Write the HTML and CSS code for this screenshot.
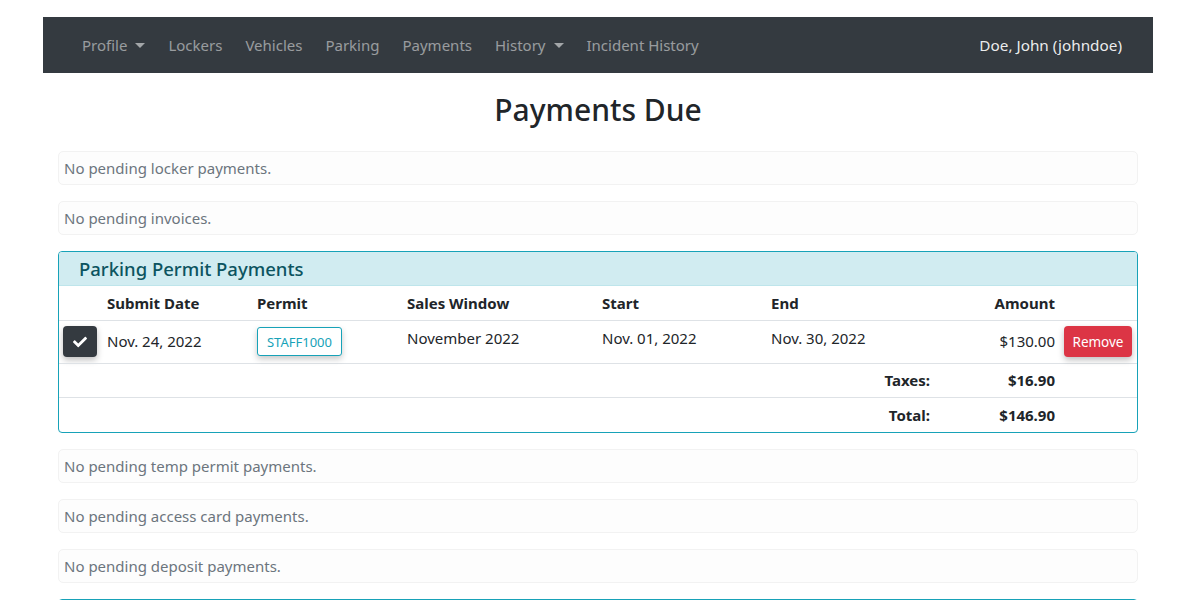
FILE: index.html
```html
<!DOCTYPE html>
<html lang="en">
<head>
<meta charset="utf-8">
<title>Payments Due</title>
<link rel="stylesheet" href="styles.css">
</head>
<body>
<div class="page">
  <nav class="navbar">
    <ul class="nav-left">
      <li class="nav-link dropdown">Profile <span class="caret"></span></li>
      <li class="nav-link">Lockers</li>
      <li class="nav-link">Vehicles</li>
      <li class="nav-link">Parking</li>
      <li class="nav-link">Payments</li>
      <li class="nav-link dropdown">History <span class="caret"></span></li>
      <li class="nav-link">Incident History</li>
    </ul>
    <div class="nav-user">Doe, John (johndoe)</div>
  </nav>

  <main class="content">
    <h2 class="title">Payments Due</h2>

    <div class="empty-box">No pending locker payments.</div>
    <div class="empty-box">No pending invoices.</div>

    <section class="card">
      <h5 class="card-header">Parking Permit Payments</h5>
      <table class="pay-table">
        <colgroup>
          <col class="c-check"><col class="c-date"><col class="c-permit"><col class="c-window"><col class="c-start"><col class="c-end"><col class="c-amount"><col class="c-action">
        </colgroup>
        <thead>
          <tr>
            <th></th>
            <th>Submit Date</th>
            <th>Permit</th>
            <th>Sales Window</th>
            <th>Start</th>
            <th>End</th>
            <th class="right">Amount</th>
            <th></th>
          </tr>
        </thead>
        <tbody>
          <tr class="item-row">
            <td class="mid"><button class="btn-check" aria-label="Selected"><svg viewBox="0 0 512 512" width="14" height="14"><path fill="#fff" d="M173.898 439.404l-166.4-166.4c-9.997-9.997-9.997-26.206 0-36.204l36.203-36.204c9.997-9.998 26.207-9.998 36.204 0L192 312.69 432.095 72.596c9.997-9.997 26.207-9.997 36.204 0l36.203 36.204c9.997 9.997 9.997 26.206 0 36.204l-294.4 294.401c-9.998 9.997-26.207 9.997-36.204-.001z"/></svg></button></td>
            <td class="mid">Nov. 24, 2022</td>
            <td class="mid"><button class="btn-permit">STAFF1000</button></td>
            <td class="top">November 2022</td>
            <td class="top">Nov. 01, 2022</td>
            <td class="top">Nov. 30, 2022</td>
            <td class="mid right">$130.00</td>
            <td class="mid action"><button class="btn-remove">Remove</button></td>
          </tr>
          <tr class="sum-row">
            <td colspan="6" class="right bold">Taxes:</td>
            <td class="right bold">$16.90</td>
            <td></td>
          </tr>
          <tr class="sum-row last">
            <td colspan="6" class="right bold">Total:</td>
            <td class="right bold">$146.90</td>
            <td></td>
          </tr>
        </tbody>
      </table>
    </section>

    <div class="empty-box">No pending temp permit payments.</div>
    <div class="empty-box">No pending access card payments.</div>
    <div class="empty-box">No pending deposit payments.</div>

    <section class="card next-card"></section>
  </main>
</div>
</body>
</html>
```

FILE: styles.css
```css
* { box-sizing: border-box; }

html, body {
  margin: 0;
  padding: 0;
  background: #fff;
  overflow: hidden;
}

body {
  font-family: "Noto Sans", "Open Sans", sans-serif;
  font-size: 15px;
  line-height: 1.5;
  color: #212529;
}

.page {
  width: 1110px;
  margin-left: 43px;
  padding-top: 17px;
}

.navbar {
  height: 56px;
  background: #343a40;
  display: flex;
  align-items: center;
  justify-content: space-between;
  padding: 0 31px 0 27.5px;
}

.nav-left {
  list-style: none;
  margin: 0;
  padding: 0;
  display: flex;
}

.nav-link {
  padding: 0 11.5px;
  color: rgba(255, 255, 255, 0.5);
  display: flex;
  align-items: center;
  gap: 4px;
}

.caret {
  display: inline-block;
  width: 0;
  height: 0;
  margin-left: 4px;
  border-top: 5px solid rgba(255, 255, 255, 0.55);
  border-left: 5px solid transparent;
  border-right: 5px solid transparent;
}

.nav-user {
  color: rgba(255, 255, 255, 0.92);
  font-size: 15.3px;
}

.content {
  padding: 0 15px;
}

.title {
  margin: 19px 0 23px;
  text-align: center;
  font-size: 30px;
  font-weight: 500;
  line-height: 1.2;
}

.empty-box {
  height: 34px;
  margin-bottom: 16px;
  padding: 0 5px;
  display: flex;
  align-items: center;
  color: #6c757d;
  background: #fdfdfd;
  border: 1px solid #f2f2f2;
  border-radius: 5px;
}

.card {
  border: 1px solid #17a2b8;
  border-radius: 4px;
  margin-bottom: 16px;
  overflow: hidden;
}

.card-header {
  margin: 0;
  height: 34px;
  padding: 0 20px;
  display: flex;
  align-items: center;
  background: #d1ecf1;
  border-bottom: 1px solid #bee5eb;
  color: #0c5460;
  font-size: 18.5px;
  font-weight: 500;
}

.pay-table {
  width: 100%;
  border-collapse: collapse;
  table-layout: fixed;
}

.c-check { width: 43px; }
.c-date { width: 150px; }
.c-permit { width: 150px; }
.c-window { width: 195px; }
.c-start { width: 169px; }
.c-end { width: 169px; }
.c-amount { width: 125px; }
.c-action { width: 77px; }

.pay-table th {
  height: 34px;
  padding: 0 5px;
  text-align: left;
  font-weight: 700;
  vertical-align: middle;
}

.pay-table td {
  padding: 0 5px;
  border-top: 1px solid #dee2e6;
}

.item-row td { height: 43px; }
.sum-row td { height: 34px; vertical-align: middle; }
.sum-row.last td { height: 35px; }

.pay-table td.mid { vertical-align: middle; }
.pay-table td.top { vertical-align: top; padding-top: 6px; }
.pay-table td:first-child { padding-left: 4px; }
.pay-table td.action { padding-left: 4px; padding-right: 0; }

.right { text-align: right !important; }
.bold { font-weight: 700; }

.btn-check {
  width: 34px;
  height: 31px;
  border: 0;
  border-radius: 4px;
  background: #343a40;
  display: flex;
  align-items: center;
  justify-content: center;
  box-shadow: 0 3px 6px rgba(0, 0, 0, 0.25);
  padding: 0;
}

.btn-permit {
  height: 29px;
  width: 85px;
  padding: 0;
  font-family: inherit;
  font-size: 13px;
  color: #17a2b8;
  background: #fff;
  border: 1px solid #17a2b8;
  border-radius: 3px;
  box-shadow: 0 3px 6px rgba(0, 0, 0, 0.22);
}

.btn-remove {
  height: 31px;
  width: 68px;
  padding: 0;
  font-family: inherit;
  font-size: 13.5px;
  color: #fff;
  background: #dc3545;
  border: 0;
  border-radius: 4px;
  box-shadow: 0 3px 6px rgba(0, 0, 0, 0.25);
}

.next-card {
  height: 60px;
}
```
